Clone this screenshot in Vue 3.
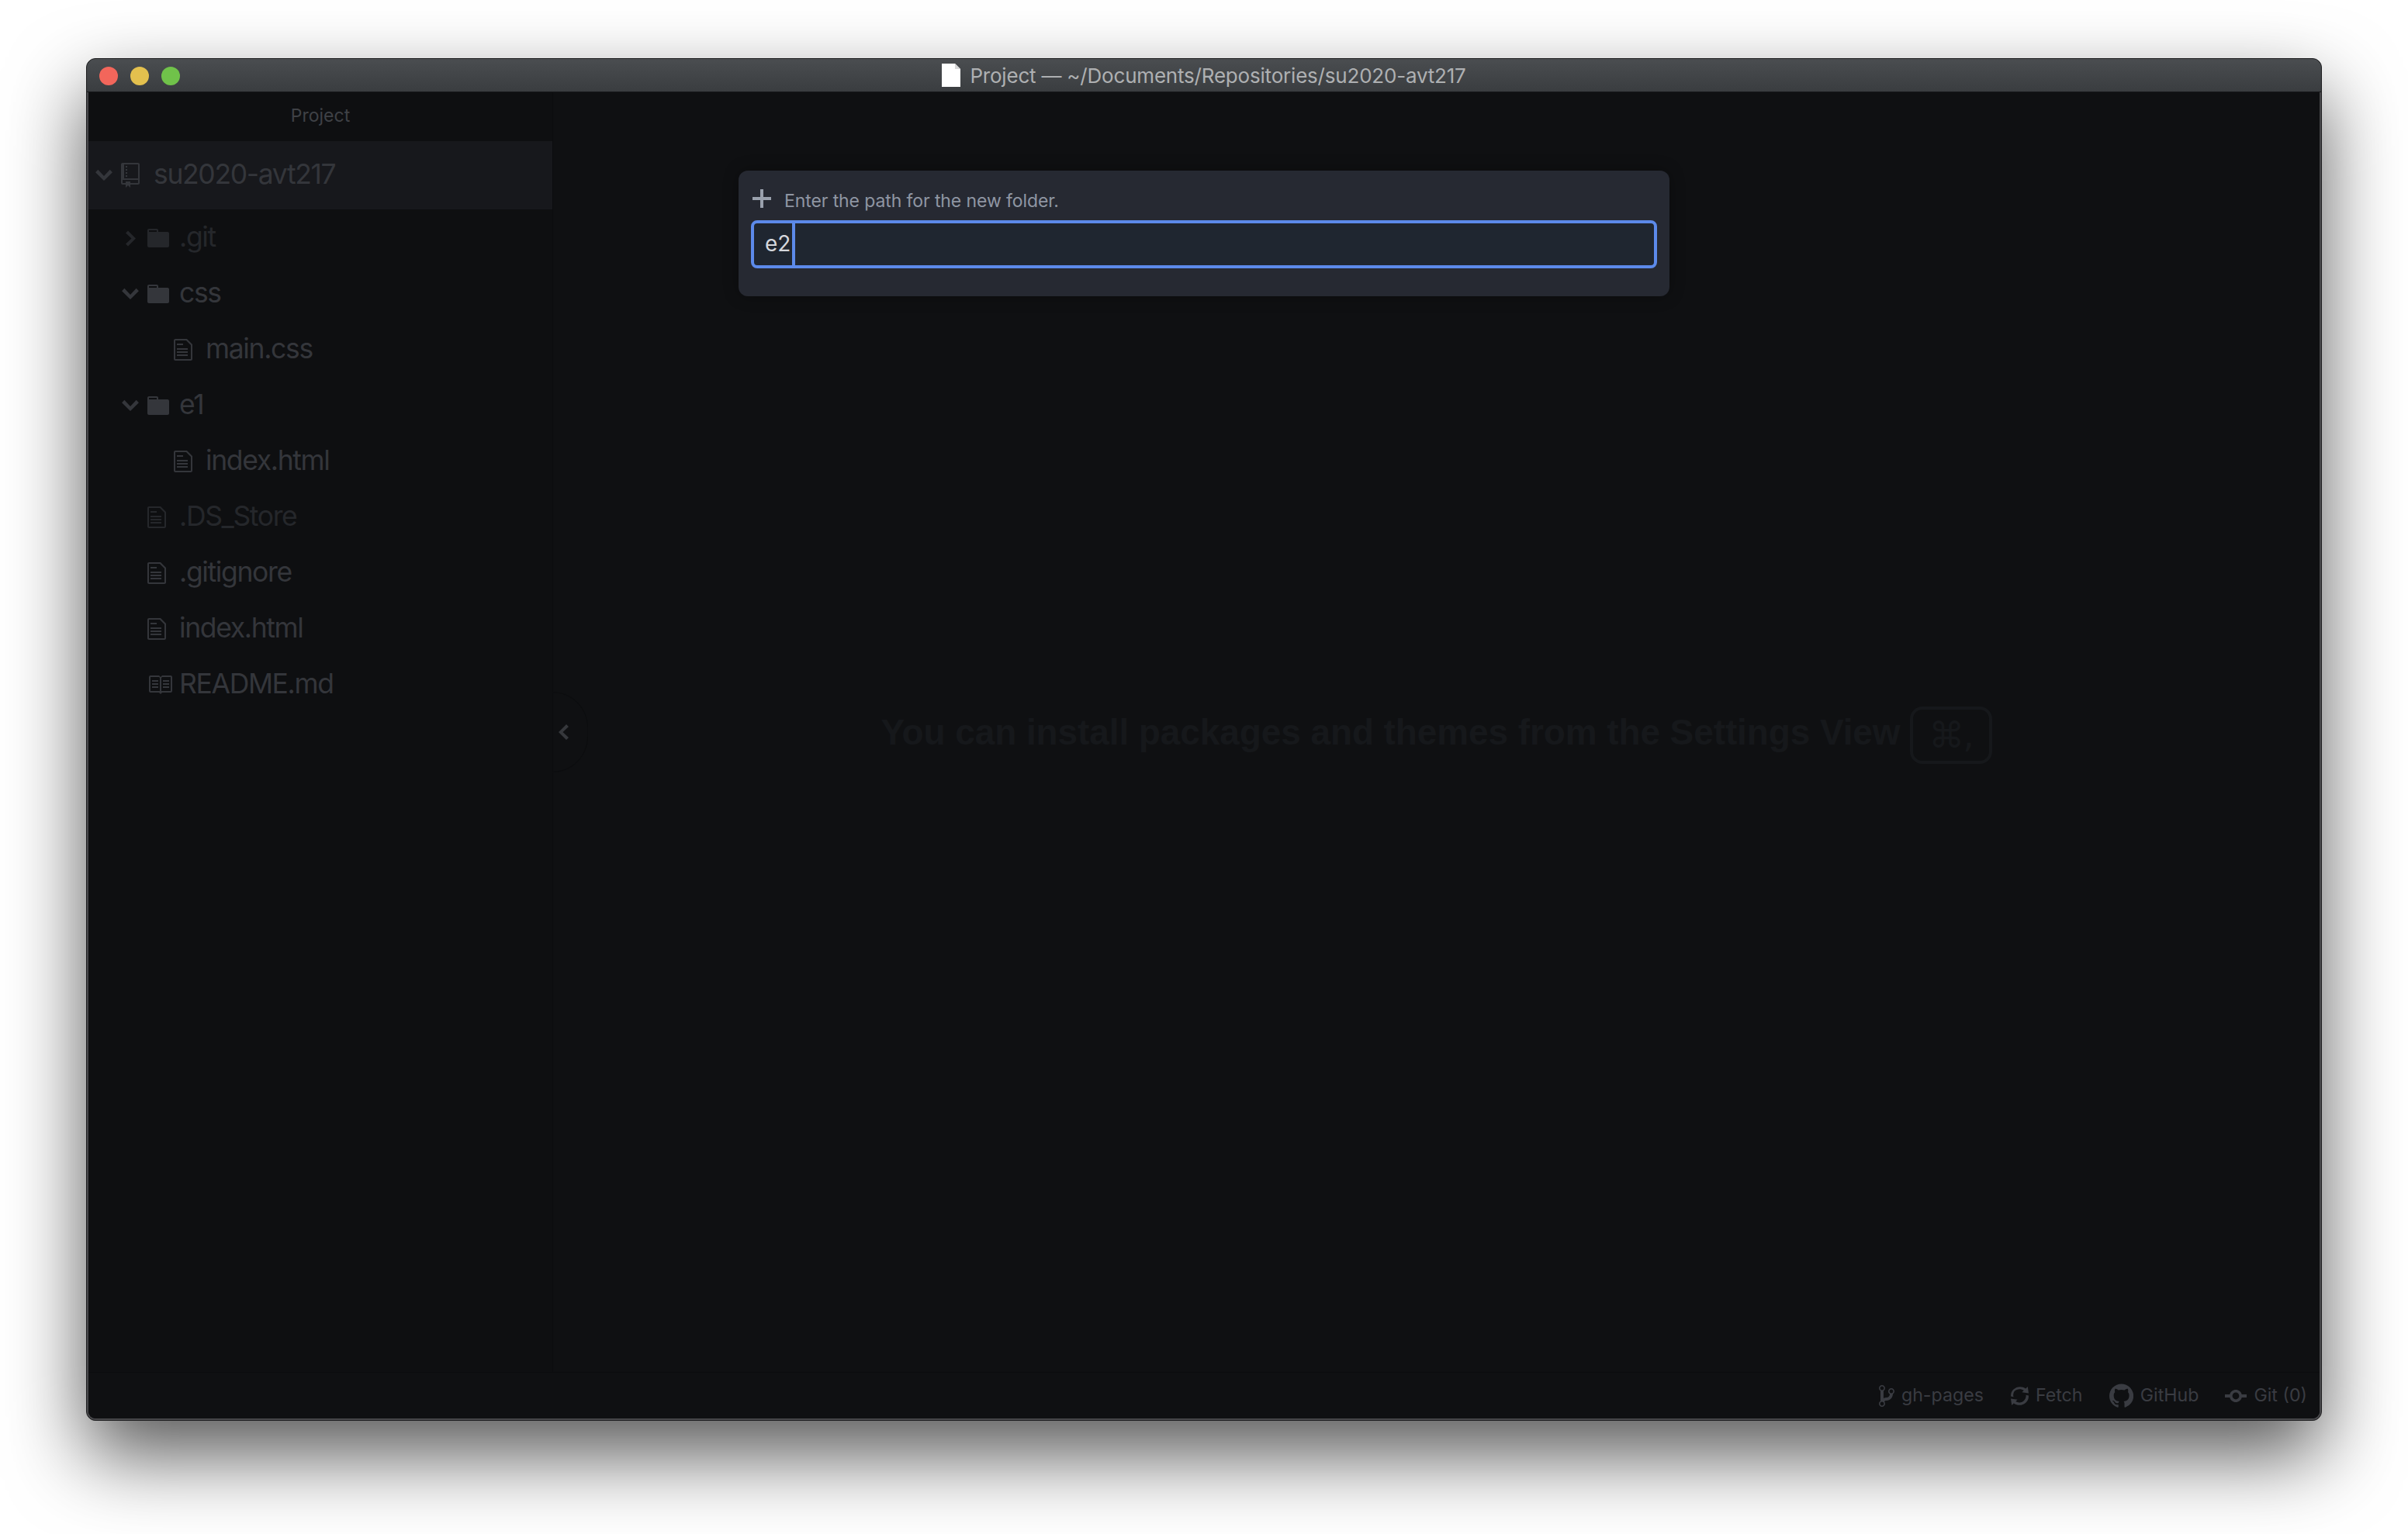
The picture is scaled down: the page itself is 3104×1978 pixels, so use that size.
<script setup>
const icons = {
  repo: { w: 12, d: 'M4 9H3V8h1v1zm0-3H3v1h1V6zm0-2H3v1h1V4zm0-2H3v1h1V2zm8-1v12c0 .55-.45 1-1 1H6v2l-1.5-1.5L3 16v-2H1c-.55 0-1-.45-1-1V1c0-.55.45-1 1-1h10c.55 0 1 .45 1 1zm-1 10H1v2h2v-1h3v1h5v-2zm0-10H2v9h9V1z' },
  folder: { w: 14, d: 'M13 4H7V3c0-.66-.31-1-1-1H1c-.55 0-1 .45-1 1v10c0 .55.45 1 1 1h12c.55 0 1-.45 1-1V5c0-.55-.45-1-1-1zM6 4H1V3h5v1z' },
  file: { w: 12, d: 'M6 5H2V4h4v1zM2 8h7V7H2v1zm0 2h7V9H2v1zm0 2h7v-1H2v1zm10-7.5V14c0 .55-.45 1-1 1H1c-.55 0-1-.45-1-1V2c0-.55.45-1 1-1h7.5L12 4.5zM11 5L8 2H1v12h10V5z' },
  book: { w: 16, d: 'M3 5h4v1H3V5zm0 3h4V7H3v1zm0 2h4V9H3v1zm11-5h-4v1h4V5zm0 2h-4v1h4V7zm0 2h-4v1h4V9zm2-6v9c0 .55-.45 1-1 1H9.5l-1 1-1-1H2c-.55 0-1-.45-1-1V3c0-.55.45-1 1-1h5.5l1 1 1-1H15c.55 0 1 .45 1 1zm-8 .5L7.5 3H2v9h6V3.5zm7-.5H9.5l-.5.5V12h6V3z' },
  down: { w: 10, d: 'M5 11L0 6l1.5-1.5L5 8.25 8.5 4.5 10 6l-5 5z' },
  right: { w: 8, d: 'M7.5 8l-5 5L1 11.5 4.75 8 1 4.5 2.5 3l5 5z' },
  left: { w: 8, d: 'M5.5 3L7 4.5 3.25 8 7 11.5 5.5 13l-5-5 5-5z' },
  plus: { w: 12, d: 'M12 9H7v5H5V9H0V7h5V2h2v5h5v2z' },
  branch: { w: 10, d: 'M10 5c0-1.11-.89-2-2-2a1.993 1.993 0 0 0-1 3.72v.3c-.02.52-.23.98-.63 1.38-.4.4-.86.61-1.38.63-.83.02-1.48.16-2 .45V4.72a1.993 1.993 0 0 0 1-1.72c0-1.11-.89-2-2-2C.89 1 0 1.89 0 3a2 2 0 0 0 1 1.72v6.56c-.59.35-1 .99-1 1.72 0 1.11.89 2 2 2 1.11 0 2-.89 2-2 0-.53-.2-1-.53-1.36.09-.06.48-.41.59-.47.25-.11.56-.17.94-.17 1.05-.05 1.95-.45 2.75-1.25S8.95 7.77 9 6.73h-.02C9.59 6.37 10 5.73 10 5zM2 1.8c.66 0 1.2.55 1.2 1.2 0 .65-.55 1.2-1.2 1.2C1.35 4.2.8 3.65.8 3c0-.65.55-1.2 1.2-1.2zm0 12.41c-.66 0-1.2-.55-1.2-1.2 0-.65.55-1.2 1.2-1.2.65 0 1.2.55 1.2 1.2 0 .65-.55 1.2-1.2 1.2zm6-8c-.66 0-1.2-.55-1.2-1.2 0-.65.55-1.2 1.2-1.2.65 0 1.2.55 1.2 1.2 0 .65-.55 1.2-1.2 1.2z' },
  sync: { w: 12, d: 'M10.24 7.4a4.15 4.15 0 0 1-1.2 3.6 4.346 4.346 0 0 1-5.41.54L4.8 10.4.5 9.8l.6 4.2 1.31-1.26c2.36 1.74 5.7 1.57 7.84-.54a5.876 5.876 0 0 0 1.74-4.46l-1.75-.34zM2.8 5c1.64-1.65 4.2-1.89 6.1-.6L7.7 5.6l4.3.6-.6-4.2-1.31 1.26C7.73 1.52 4.39 1.69 2.25 3.8A5.876 5.876 0 0 0 .51 8.26l1.75.34A4.15 4.15 0 0 1 2.8 5z' },
  github: { w: 16, d: 'M8 0C3.58 0 0 3.58 0 8c0 3.54 2.29 6.53 5.47 7.59.4.07.55-.17.55-.38 0-.19-.01-.82-.01-1.49-2.01.37-2.53-.49-2.69-.94-.09-.23-.48-.94-.82-1.13-.28-.15-.68-.52-.01-.53.63-.01 1.08.58 1.23.82.72 1.21 1.87.87 2.33.66.07-.52.28-.87.51-1.07-1.78-.2-3.64-.89-3.64-3.95 0-.87.31-1.59.82-2.15-.08-.2-.36-1.02.08-2.12 0 0 .67-.21 2.2.82.64-.18 1.32-.27 2-.27.68 0 1.36.09 2 .27 1.53-1.04 2.2-.82 2.2-.82.44 1.1.16 1.92.08 2.12.51.56.82 1.27.82 2.15 0 3.07-1.87 3.75-3.65 3.95.29.25.54.73.54 1.48 0 1.07-.01 1.93-.01 2.2 0 .21.15.46.55.38A8.013 8.013 0 0 0 16 8c0-4.42-3.58-8-8-8z' },
  commit: { w: 14, d: 'M10.86 7c-.45-1.72-2-3-3.86-3-1.86 0-3.41 1.28-3.86 3H0v2h3.14c.45 1.72 2 3 3.86 3 1.86 0 3.41-1.28 3.86-3H14V7h-3.14zM7 10.2c-1.22 0-2.2-.98-2.2-2.2 0-1.22.98-2.2 2.2-2.2 1.22 0 2.2.98 2.2 2.2 0 1.22-.98 2.2-2.2 2.2z' }
}

const tree = [
  { name: '.git', depth: 1, icon: 'folder', chevron: 'right', dim: true },
  { name: 'css', depth: 1, icon: 'folder', chevron: 'down' },
  { name: 'main.css', depth: 2, icon: 'file' },
  { name: 'e1', depth: 1, icon: 'folder', chevron: 'down' },
  { name: 'index.html', depth: 2, icon: 'file' },
  { name: '.DS_Store', depth: 1, icon: 'file', dim: true },
  { name: '.gitignore', depth: 1, icon: 'file' },
  { name: 'index.html', depth: 1, icon: 'file' },
  { name: 'README.md', depth: 1, icon: 'book' }
]

const statusItems = [
  { label: 'gh-pages', icon: 'branch' },
  { label: 'Fetch', icon: 'sync' },
  { label: 'GitHub', icon: 'github' },
  { label: 'Git (0)', icon: 'commit' }
]

const vb = (name) => `0 0 ${icons[name].w} 16`
const iconWidth = (name, scale = 2) => icons[name].w * scale
</script>

<template>
  <div class="page">
    <div class="window">
      <header class="titlebar">
        <div class="lights">
          <span class="light red"></span>
          <span class="light yellow"></span>
          <span class="light green"></span>
        </div>
        <div class="title">
          <svg width="24" height="30" viewBox="0 0 24 30"><path class="doc-sheet" d="M0 0H17L24 7V30H0Z" /><path class="doc-fold" d="M17 0V7H24Z" /></svg>
          <span>Project — ~/Documents/Repositories/su2020-avt217</span>
        </div>
      </header>
      <div class="frame">
        <div class="workspace">
          <aside class="sidebar">
            <div class="panel-title">Project</div>
            <div class="root-row">
              <span class="chev"><svg class="glyph" :width="iconWidth('down', 2.2)" height="35" :viewBox="vb('down')"><path :d="icons.down.d" /></svg></span>
              <svg class="glyph root-ico" :width="iconWidth('repo')" height="32" :viewBox="vb('repo')"><path :d="icons.repo.d" /></svg>
              <span class="name">su2020-avt217</span>
            </div>
            <div class="tree">
              <div v-for="row in tree" :key="row.name + row.depth" class="row" :class="['depth-' + row.depth, { dim: row.dim }]">
                <span class="chev">
                  <svg v-if="row.chevron" class="glyph" :width="iconWidth(row.chevron, row.chevron === 'down' ? 2.2 : 2)" height="35" :viewBox="vb(row.chevron)"><path :d="icons[row.chevron].d" /></svg>
                </span>
                <span class="ico-slot"><svg class="glyph" :width="iconWidth(row.icon)" height="32" :viewBox="vb(row.icon)"><path :d="icons[row.icon].d" /></svg></span>
                <span class="name">{{ row.name }}</span>
              </div>
            </div>
          </aside>
          <main class="center">
            <div class="toggle"><svg class="glyph" width="16" height="32" :viewBox="vb('left')"><path :d="icons.left.d" /></svg></div>
            <div class="tip">
              <span>You can install packages and themes from the Settings View</span>
              <kbd class="key">⌘,</kbd>
            </div>
          </main>
        </div>
        <footer class="statusbar">
          <div v-for="item in statusItems" :key="item.label" class="status-item">
            <svg class="glyph" :width="iconWidth(item.icon, item.icon === 'github' ? 1.95 : 2)" height="32" :viewBox="vb(item.icon)"><path :d="icons[item.icon].d" /></svg>
            <span class="status-label">{{ item.label }}</span>
          </div>
        </footer>
      </div>
      <section class="dialog">
        <div class="prompt">
          <svg class="glyph plus" width="24" height="32" :viewBox="vb('plus')"><path :d="icons.plus.d" /></svg>
          <span>Enter the path for the new folder.</span>
        </div>
        <div class="input">
          <span class="typed">e2</span><span class="caret"></span>
        </div>
      </section>
    </div>
  </div>
</template>

<style>
html, body { margin: 0; background: #fff; }
</style>

<style scoped>
.page {
  width: 3104px;
  height: 1978px;
  padding: 75px 111px 0;
  box-sizing: border-box;
  background: #fff;
  overflow: hidden;
  font-family: Inter, "Liberation Sans", sans-serif;
}
.window {
  position: relative;
  height: 1755px;
  display: flex;
  flex-direction: column;
  border: 1px solid #1d1d1f;
  border-radius: 12px;
  box-shadow: 0 44px 100px rgba(0, 0, 0, 0.66);
  background: #0f1012;
}
.titlebar {
  height: 43px;
  flex: none;
  display: flex;
  align-items: center;
  position: relative;
  justify-content: center;
  border-radius: 11px 11px 0 0;
  background: linear-gradient(#4a4d50, #3a3d40);
  border-bottom: 1px solid #17181a;
  box-sizing: border-box;
}
.lights {
  position: absolute;
  left: 16px;
  top: 10px;
  display: flex;
  gap: 16px;
}
.light {
  width: 24px;
  height: 24px;
  border-radius: 50%;
}
.red { background: #f2665b; }
.yellow { background: #e3c04e; }
.green { background: #70c24a; }
.title {
  display: flex;
  align-items: center;
  gap: 12px;
  color: #aeb0b2;
  font-size: 26px;
  letter-spacing: -0.2px;
  white-space: nowrap;
}
.doc-sheet { fill: #fff; }
.doc-fold { fill: #d8d8d8; }
.glyph path { fill: currentColor; }
.frame {
  flex: 1;
  min-height: 0;
  display: flex;
  flex-direction: column;
  border: 2px solid #47474a;
  border-top: 0;
  border-radius: 0 0 11px 11px;
  overflow: hidden;
}
.workspace {
  flex: 1;
  min-height: 0;
  display: flex;
}
.sidebar {
  width: 598px;
  flex: none;
  background: #0e0f11;
  border-right: 1px solid #0b0c0e;
  color: #34363b;
  font-size: 35.5px;
  letter-spacing: -1.35px;
}
.panel-title {
  height: 63px;
  display: flex;
  align-items: center;
  justify-content: center;
  padding-bottom: 3px;
  box-sizing: border-box;
  font-size: 23px;
  letter-spacing: 0;
  color: #3f4146;
}
.root-row {
  height: 88px;
  display: flex;
  align-items: center;
  padding-left: 9px;
  background: #17181c;
  margin-bottom: 1px;
}
.chev {
  width: 22px;
  margin-right: 11px;
  flex: none;
  display: flex;
  align-items: center;
  justify-content: center;
}
.root-ico { margin-right: 18px; flex: none; }
.name { padding-bottom: 3px; }
.row {
  height: 72px;
  display: flex;
  align-items: center;
}
.depth-1 { padding-left: 43px; }
.depth-2 { padding-left: 77px; }
.ico-slot {
  width: 41px;
  flex: none;
  display: flex;
}
.dim { color: #25272b; }
.center {
  flex: 1;
  position: relative;
  display: flex;
  align-items: center;
  justify-content: center;
}
.toggle {
  position: absolute;
  left: -1px;
  top: 50%;
  margin-top: -52px;
  width: 46px;
  height: 104px;
  display: flex;
  align-items: center;
  padding-left: 7px;
  box-sizing: border-box;
  color: #36383c;
  border-radius: 0 52px 52px 0;
  border: 1px solid #0c0d0f;
  border-left: 0;
}
.tip {
  display: flex;
  align-items: center;
  gap: 12px;
  font-family: "Liberation Sans", sans-serif;
  font-weight: 700;
  font-size: 46px;
  letter-spacing: -0.1px;
  color: #16181b;
  white-space: nowrap;
}
.key {
  width: 106px;
  height: 74px;
  margin-top: 8px;
  box-sizing: border-box;
  border: 4px solid #16181b;
  border-radius: 16px;
  display: flex;
  align-items: center;
  justify-content: center;
  font-family: "DejaVu Sans", sans-serif;
  font-weight: 400;
  font-size: 46px;
  letter-spacing: -2px;
}
.statusbar {
  height: 60px;
  flex: none;
  display: flex;
  align-items: center;
  justify-content: flex-end;
  padding-right: 16px;
  background: #0f1012;
  border-top: 1px solid #0b0c0e;
  color: #3a3c42;
  font-size: 23.2px;
  box-sizing: border-box;
}
.status-item {
  display: flex;
  align-items: center;
  gap: 9px;
  margin-left: 34px;
}
.status-label { padding-bottom: 2px; }
.dialog {
  position: absolute;
  top: 144px;
  left: 840px;
  width: 1200px;
  height: 162px;
  box-sizing: border-box;
  background: #262932;
  border-radius: 12px;
  padding: 16px 16px 0;
  box-shadow: 0 0 20px rgba(0, 0, 0, 0.3);
}
.prompt {
  display: flex;
  align-items: center;
  height: 48px;
  box-sizing: border-box;
  padding: 0 0 2px 2px;
  color: #8f96a3;
  font-size: 23px;
  letter-spacing: -0.1px;
}
.plus {
  margin: 0 17px 6px 0;
  color: #9aa1ad;
}
.input {
  height: 62px;
  box-sizing: border-box;
  border: 4px solid #5c8aea;
  border-radius: 8px;
  background: #1f2630;
  display: flex;
  align-items: stretch;
  padding-left: 14px;
  color: #d5d8dd;
  font-size: 28px;
}
.typed {
  line-height: 52px;
}
.caret {
  width: 4px;
  margin-left: 2px;
  background: #5c8aea;
}
</style>
